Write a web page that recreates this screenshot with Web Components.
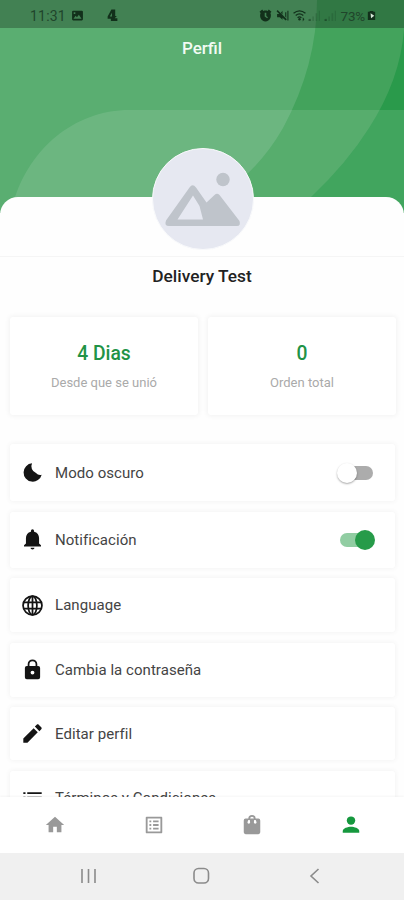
<!DOCTYPE html>
<html lang="es"><head><meta charset="utf-8"><title>Perfil</title>
<style>html,body{margin:0;height:900px;overflow:hidden;background:#fefefe;font-family:Roboto,"Liberation Sans",sans-serif}</style></head>
<body><profile-screen></profile-screen>
<script>
const define=(name,html)=>customElements.define(name,class extends HTMLElement{
  connectedCallback(){ if(this.shadowRoot) return;
    this.attachShadow({mode:'open'}).innerHTML=typeof html==='function'?html(this):html; }
});
const icons={
 moon:'<path d="M11.500 1.500A10.500 10.500 0 1 0 22.500 14.500A6.500 6.500 0 0 1 16 12.500A8 8 0 0 1 11.500 1.500Z"/>',
 bell:'<path d="M12 23.500c1.200 0 2.200-.9 2.200-2h-4.400c0 1.100 1 2 2.200 2ZM19.500 16.500V10.500c0-3.800-2-6.600-5.700-7.400V2.200a1.800 1.800 0 0 0-3.600 0v.9C6.500 3.900 4.500 6.700 4.500 10.500v6L2.300 18.700V20H21.700V18.700Z"/>',
 globe:'<g fill="none" stroke="currentColor" stroke-width="2"><circle cx="12" cy="12" r="10.800"/><ellipse cx="12" cy="12" rx="5" ry="10.800"/><path d="M12 1.500V22.500M2 8.300H22M2 15.700H22"/></g>',
 lock:'<path fill-rule="evenodd" d="M18.500 8H17.500V6A5.500 5.500 0 0 0 6.500 6V8H5.500A2.200 2.200 0 0 0 3.300 10.200V20.800A2.200 2.200 0 0 0 5.500 23H18.500A2.200 2.200 0 0 0 20.700 20.800V10.200A2.200 2.200 0 0 0 18.500 8ZM12 17.700A2.200 2.200 0 1 1 12 13.300A2.200 2.200 0 0 1 12 17.700ZM15.500 8H8.500V6A3.500 3.500 0 0 1 15.500 6Z"/>',
 pencil:'<path d="M1.500 17.800V22.500H6.200L18 10.700L13.300 6ZM22 7.200C22.700 6.500 22.700 5.600 22 4.900L19.100 2C18.400 1.300 17.500 1.300 16.800 2L14.700 4.100L19.900 9.300Z"/>',
 list:'<path d="M1.500 6H4V8H1.500ZM6 6H22.500V8H6ZM1.500 11H4V13H1.500ZM6 11H22.500V13H6ZM1.500 17H4V19H1.500ZM6 17H22.500V19H6Z"/>',
 home:'<path d="M10 20V14H14V20H19V12H22L12 3L2 12H5V20Z"/>',
 orders:'<path d="M19 5V19H5V5ZM20.100 3H3.900C3.400 3 3 3.400 3 3.900V20.100C3 20.500 3.400 21 3.900 21H20.100C20.500 21 21 20.500 21 20.100V3.900C21 3.400 20.500 3 20.100 3ZM11 7H17V9H11ZM11 11H17V13H11ZM11 15H17V17H11ZM7 7H9V9H7ZM7 11H9V13H7ZM7 15H9V17H7Z"/>',
 bag:'<path fill-rule="evenodd" d="M19 5H16A4 4 0 0 0 8 5H5A2 2 0 0 0 3 7V20A2 2 0 0 0 5 22H19A2 2 0 0 0 21 20V7A2 2 0 0 0 19 5ZM12 3A2 2 0 0 1 14 5H10A2 2 0 0 1 12 3ZM10 9A1.500 1.500 0 1 1 7 9L8 6.500H9.600ZM17 9A1.500 1.500 0 1 1 14 9L14.400 6.500H16Z"/>',
 person:'<circle cx="12" cy="7.200" r="4.600"/><path d="M3 20.500V18.500C3 15.500 8.500 13.800 12 13.800S21 15.500 21 18.500V20.500Z"/>',
 photo:'<path fill-rule="evenodd" d="M4 3H20A2 2 0 0 1 22 5V19A2 2 0 0 1 20 21H4A2 2 0 0 1 2 19V5A2 2 0 0 1 4 3ZM4.500 18H19.500L14.500 10.500L11 15L8.500 12.500ZM5 6V9H8V6Z"/>',
 download:'<path d="M10 1H17V13H20L16 17H21V22H9V18H3V14L10 1ZM11 7L7 14H11Z" fill-rule="evenodd"/>',
 alarm:'<path fill-rule="evenodd" d="M1 5L6 1L8 3.500C10.500 2.500 13.500 2.500 16 3.500L18 1L23 5L21 7.500C24 14 20 23 12 23S0 14 3 7.500ZM10.500 7V14L15 17L16.500 15L13.500 13V7Z"/>',
 mute:'<path d="M1 4L3 2L20 19L18 21L12 16V20L7 15H2V9H6ZM12 3V10L9 7ZM17 6H19V16L17 14ZM21 3H23V21H21Z"/>',
 wifi:'<g fill="none" stroke="currentColor" stroke-width="2.500"><path d="M1 8Q12-1 23 8M5 12Q12 6 19 12M8.500 16Q12 13 15.500 16"/></g><circle cx="12" cy="19" r="2.200"/><path d="M18 15L21 19L18 23Z"/>',
 signal:'<path opacity=".3" d="M2 22H5V18H2ZM8 22H11V14H8ZM14 22H17V8H14ZM20 22H22V3H20Z"/><path d="M1 22H5V19H1Z"/>',
 battery:'<path fill-rule="evenodd" d="M8 2H16V4H20V22H4V4H8Z"/><path fill="#d8e8da" d="M10 7L18 12.500L11 18Z"/>'
};
define('ui-icon',e=>`<style>:host{display:block;width:24px;height:24px;flex:none}svg{display:block;width:100%;height:100%;fill:currentColor}</style><svg viewBox="0 0 24 24">${icons[e.getAttribute('name')]}</svg>`);
define('status-bar',`<style>:host{display:flex;align-items:center;height:28px;box-sizing:border-box;padding:3px 27px 0 30px;background:rgba(0,0,0,.26);color:#20452b;font-size:14px}
ui-icon{width:13px;height:13px;color:#12301b}.time{letter-spacing:.2px;width:41px}.dl{margin-left:22px}.sp{flex:1}.right{display:flex;align-items:center;gap:4px}.right ui-icon.s{opacity:.6}span{white-space:nowrap}ui-icon.bat{margin-left:-3px;width:11px}.pct{font-size:13.500px;letter-spacing:-.2px}</style>
<span class="time">11:31</span><ui-icon name="photo"></ui-icon><ui-icon class="dl" name="download"></ui-icon><div class="sp"></div>
<div class="right"><ui-icon name="alarm"></ui-icon><ui-icon name="mute"></ui-icon><ui-icon name="wifi"></ui-icon><ui-icon class="s" name="signal" style="margin-left:-2px"></ui-icon><ui-icon class="s" name="signal" style="margin-left:-1px"></ui-icon><span class="pct">73%</span><ui-icon class="bat" name="battery"></ui-icon></div>`);
define('profile-header',`<style>:host{display:grid;height:213px}:host>*{grid-area:1/1}svg{display:block;width:404px;height:213px}.top{z-index:1}h1{margin:0;text-align:center;color:#f2fbf4;font-size:17px;font-weight:500;line-height:41px}</style>
<svg viewBox="0 0 404 213"><rect width="404" height="213" fill="#2a9a4b"/><path fill="#43a35c" d="M0 0H404V30Q400 80 369 128Q347 163 311 197L290 213H0Z"/><path fill="#5aae71" d="M0 0H317Q317 65 283 128Q267 156 244 177L205 213H0Z"/><path fill="#fff" opacity=".11" d="M404 110H130C72 110 30 151 15 197L10 213H404Z"/></svg>
<div class="top"><status-bar></status-bar><h1><slot></slot></h1></div>`);
define('profile-avatar',`<style>:host{display:block;width:102px;height:102px;border-radius:50%;box-sizing:border-box;border:1.5px solid #f9fafc;background:#e6e8f1;overflow:hidden}svg{display:block}</style>
<svg width="99" height="99" viewBox="0 0 99 99"><g fill="#bfc4cb"><circle cx="70" cy="30.500" r="6.700"/><path fill-rule="evenodd" d="M13 71.500L36.500 38.500Q39.500 34 43 38.500L53.500 53.500L61.500 46Q64 43.500 66.500 46L86.500 72Q88 77 84 77H16Q11 77 13 71.500ZM24.500 70.500H50L46.500 57L40 46.500Z"/></g></svg>`);
define('stat-card',`<style>:host{display:flex;flex-direction:column;align-items:center;box-sizing:border-box;height:98px;padding-top:24px;border-radius:3px;background:#fff;box-shadow:0 0 5px 1px rgba(0,0,0,.05)}b{font-size:19.300px;line-height:25px;font-weight:500;color:#219346}span{margin-top:8px;font-size:13px;line-height:17px;color:#aaa}</style><b><slot name="value"></slot></b><span><slot></slot></span>`);
define('toggle-switch',`<style>:host{display:flex;align-items:center;width:38px;height:20px}div{width:33px;height:14px;border-radius:7px;background:#acacac;display:flex;align-items:center;margin-left:2px}i{flex:none;width:20px;height:20px;border-radius:50%;background:#fff;box-shadow:0 1px 2px rgba(0,0,0,.35);margin-left:-3px}:host([on]) div{background:#91cda2;justify-content:flex-end}:host([on]) i{background:#269b49;margin:0 -2px 0 0;box-shadow:none}</style><div><i></i></div>`);
define('menu-row',e=>`<style>:host{display:flex;align-items:center;box-sizing:border-box;padding:0 19px 0 12px;border-radius:3px;background:#fff;box-shadow:0 0 5px 1px rgba(0,0,0,.045);color:#444;font-size:15px;letter-spacing:.05px}ui-icon{width:21px;height:21px;color:#141414;margin-right:12px}span{flex:1;white-space:nowrap}</style><ui-icon name="${e.getAttribute('icon')}"></ui-icon><span><slot></slot></span><slot name="end"></slot>`);
define('tab-bar',`<style>:host{display:grid;grid-template-columns:repeat(4,98.700px);padding-left:5.500px;justify-items:center;align-items:center;height:56px;box-sizing:border-box;background:#fff;box-shadow:0 -1px 2px rgba(0,0,0,.04);color:#999;position:relative}ui-icon{width:22px;height:22px}.on{color:#16983e}</style><ui-icon name="home"></ui-icon><ui-icon name="orders"></ui-icon><ui-icon name="bag"></ui-icon><ui-icon class="on" name="person"></ui-icon>`);
define('system-nav',`<style>:host{display:block;height:47px;background:#f0f0f0}svg{display:block}</style><svg width="404" height="47" viewBox="0 0 404 47" fill="none" stroke="#8b8b8b" stroke-width="1.600"><path d="M82 16V30M88.500 16V30M95 16V30"/><rect x="194" y="15.500" width="14.500" height="14.500" rx="4.500"/><path d="M318.500 16L311 23L318.500 30"/></svg>`);
define('profile-screen',`<style>:host{display:grid;grid-template-rows:797px 56px 47px;width:404px;height:900px;overflow:hidden}main{overflow:hidden;background:#fefefe}.sheet{position:relative;margin-top:-16px;border-radius:18px 18px 0 0;background:#fefefe;height:59px;border-bottom:1px solid #f5f5f5}.sheet profile-avatar{position:absolute;left:151.500px;top:-49.500px}h2{margin:9px 0 0;font-size:17.300px;line-height:20px;font-weight:500;color:#222;text-align:center}.stats{display:grid;grid-template-columns:188px 188px;gap:10px;padding:31px 0 0 10px}.rows{display:grid;grid-template-rows:57px 56px 54px 54px 53px 54px;gap:10.500px;padding:29px 9px 0 10px}</style>
<main><profile-header>Perfil</profile-header><div class="sheet"><profile-avatar></profile-avatar></div><h2>Delivery Test</h2>
<div class="stats"><stat-card><span slot="value">4 Dias</span>Desde que se unió</stat-card><stat-card><span slot="value">0</span>Orden total</stat-card></div>
<div class="rows"><menu-row icon="moon">Modo oscuro<toggle-switch slot="end"></toggle-switch></menu-row><menu-row icon="bell">Notificación<toggle-switch slot="end" on></toggle-switch></menu-row><menu-row icon="globe">Language</menu-row><menu-row icon="lock">Cambia la contraseña</menu-row><menu-row icon="pencil">Editar perfil</menu-row><menu-row icon="list">Términos y Condiciones</menu-row></div></main><tab-bar></tab-bar><system-nav></system-nav>`);
</script></body></html>
